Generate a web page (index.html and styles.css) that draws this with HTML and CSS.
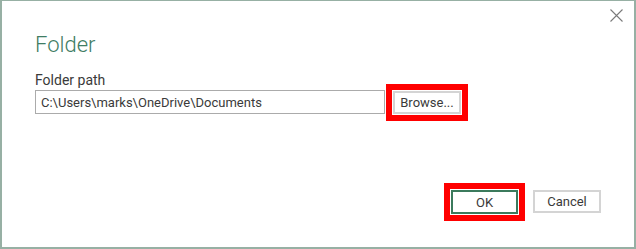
FILE: index.html
```html
<!DOCTYPE html>
<html lang="en">
<head>
    <meta charset="UTF-8">
    <meta name="viewport" content="width=device-width, initial-scale=1.0">
    <title>Folder</title>
    <link rel="stylesheet" href="styles.css">
</head>
<body>
    <div class="dialog">
        <div class="title-bar">
            <button class="close" aria-label="Close">
                <svg width="13" height="13" viewBox="0 0 13 13">
                    <path d="M0.5 0.5 L12.5 12.5 M12.5 0.5 L0.5 12.5" stroke="#7a7a7a" stroke-width="1.1" fill="none"/>
                </svg>
            </button>
        </div>
        <h1>Folder</h1>
        <label for="folder-path">Folder path</label>
        <div class="path-row">
            <input id="folder-path" type="text" value="C:\Users\marks\OneDrive\Documents">
            <button class="btn highlight">Browse...</button>
        </div>
        <div class="actions">
            <button class="btn primary highlight">OK</button>
            <button class="btn">Cancel</button>
        </div>
    </div>
</body>
</html>
```

FILE: styles.css
```css
body {
    margin: 0;
    padding: 0;
    background-color: #fff;
    font-family: Roboto, "Open Sans", sans-serif;
}

.dialog {
    box-sizing: border-box;
    width: 636px;
    height: 249px;
    border: 2px solid #97b0a4;
    border-top-width: 1px;
    padding: 8px 33px 0 33px;
    display: flex;
    flex-direction: column;
}

.title-bar {
    display: flex;
    justify-content: flex-end;
    margin-right: -22px;
}

.close {
    border: none;
    background: none;
    padding: 0;
    width: 13px;
    height: 13px;
    display: block;
}

.close svg {
    display: block;
}

h1 {
    font-size: 22px;
    font-weight: 300;
    color: #3f7d64;
    margin: 8px 0 0 0;
    line-height: 30px;
}

label {
    font-size: 14px;
    color: #3a3a3a;
    margin-top: 10px;
    line-height: 20px;
}

.path-row {
    display: flex;
    align-items: center;
    gap: 8px;
    margin-top: 0;
}

input {
    box-sizing: border-box;
    width: 350px;
    height: 24px;
    border: 1px solid #ababab;
    padding: 0 5px;
    font-family: inherit;
    font-size: 13px;
    color: #3a3a3a;
    outline: none;
}

.btn {
    box-sizing: border-box;
    width: 68px;
    height: 23px;
    background: #fff;
    border: 2px solid #d4d4d4;
    font-family: inherit;
    font-size: 13px;
    color: #3a3a3a;
    padding: 0;
}

.btn.primary {
    width: 67px;
    height: 24px;
    border-color: #3b7a5c;
}

.highlight {
    outline: 6px solid #f00;
    outline-offset: 1px;
}

.actions {
    display: flex;
    justify-content: flex-end;
    gap: 15px;
    margin-top: auto;
    margin-bottom: 33px;
}
```
